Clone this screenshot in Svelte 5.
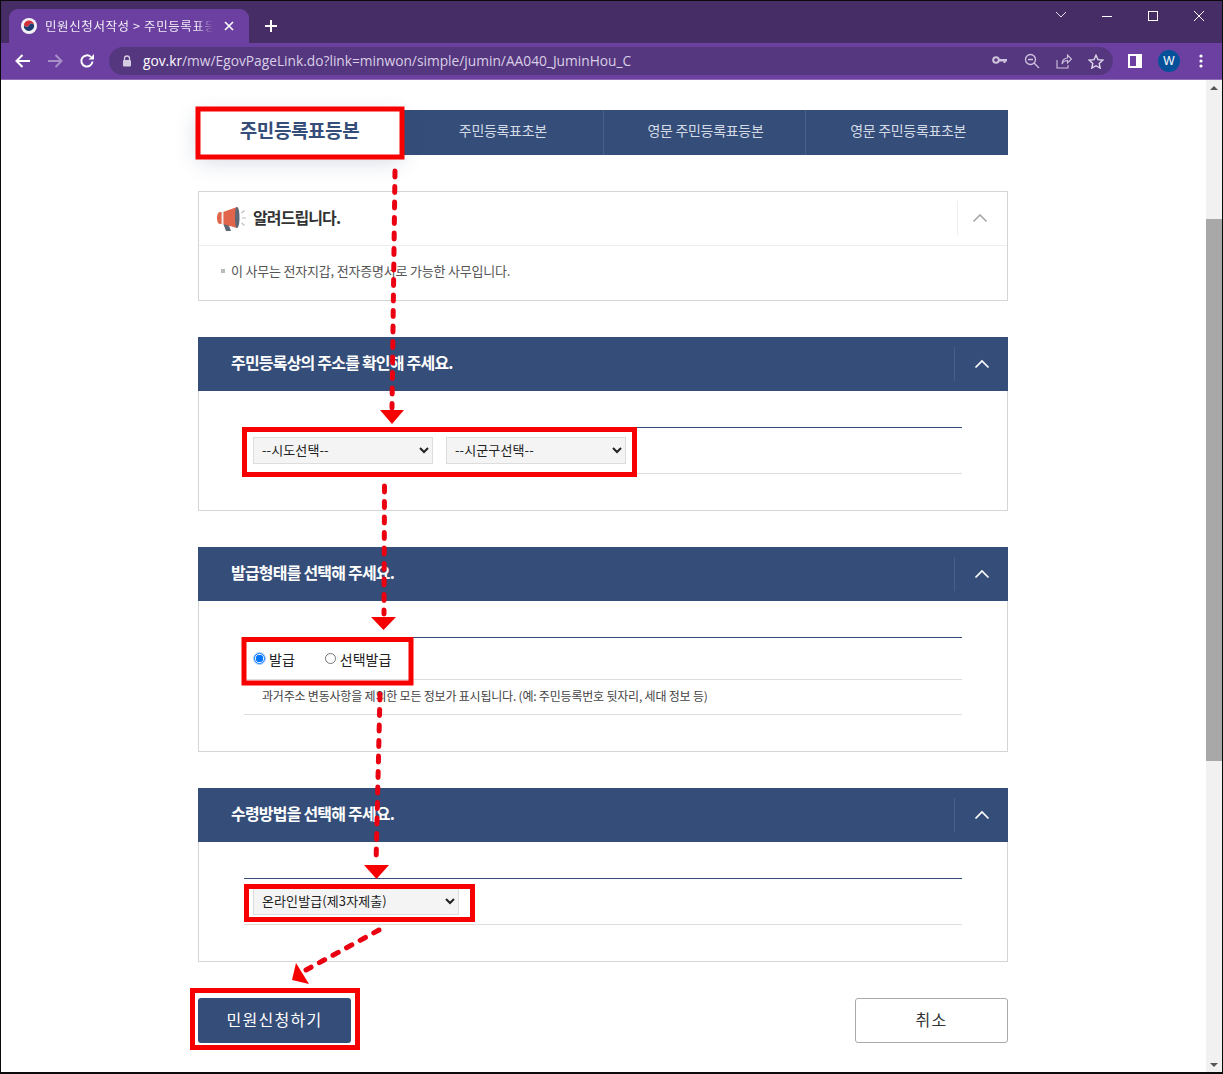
<script>
  const tabs = ['주민등록표등본', '주민등록표초본', '영문 주민등록표등본', '영문 주민등록표초본'];
  const sido = '--시도선택--';
  const sigungu = '--시군구선택--';

  // annotation boxes painted on top of the screenshot
  const boxes = [
    [198, 109, 204, 48],
    [244.5, 429.5, 390, 45],
    [244, 639.5, 167, 43.5],
    [246.5, 886.5, 226, 33],
    [192.5, 990.5, 165, 57]
  ];
  const lines = [
    [395, 171, 392, 408],
    [384.5, 486, 384, 614],
    [380, 694, 376, 864],
    [379, 930, 306, 970]
  ];
  const heads = ['380,410 404,410 392,424', '371,617 396,617 383.5,630', '364,865 389,865 376.5,879', '296,963 292,980 309,984'];
</script>

{#snippet chevron()}
  <svg class="chev" width="16" height="10" viewBox="0 0 16 10"><path d="M1.5 8.5 8 2l6.500 6.500" fill="none" stroke="currentColor" stroke-width="1.700"/></svg>
{/snippet}

{#snippet head(title)}
  <div class="section-head">
    <h3>{title}</h3>
    <span class="toggle">{@render chevron()}</span>
  </div>
{/snippet}

<div class="window">
  <header class="titlebar">
    <div class="tab">
      <svg class="favicon" width="16" height="16" viewBox="0 0 16 16">
        <circle cx="8" cy="8" r="8" fill="#f4f2f6"/>
        <path d="M2.800 7.200a5.200 5.200 0 0 1 10.400 .8c0-1.400-1.200-2.400-2.600-2.400S8.300 6.500 8 7.500 6.300 9 5.200 8.700 3.500 7.300 2.800 7.200Z" fill="#d3303c"/>
        <path d="M2.800 7.400c.7 0 1.300 1 2.400 1.300s2.500-.2 2.800-1.200 1.200-1.900 2.600-1.900 2.600 1 2.600 2.400a5.200 5.200 0 0 1-10.400-.6Z" fill="#1c3a70"/>
      </svg>
      <span class="tab-title">민원신청서작성 &gt; 주민등록표등본</span>
      <svg width="10" height="10" viewBox="0 0 10 10"><path d="M1 1l8 8M9 1l-8 8" stroke="#fff" stroke-width="1.600"/></svg>
    </div>
    <svg class="newtab" width="12" height="12" viewBox="0 0 12 12"><path d="M6 0v12M0 6h12" stroke="#fff" stroke-width="2"/></svg>
    <div class="winctl">
      <svg width="46" height="30" viewBox="0 0 46 30"><path d="M18 11l5 5 5-5" fill="none" stroke="#e4deec" stroke-width="1"/></svg>
      <svg width="46" height="30" viewBox="0 0 46 30"><path d="M18 15.500h10" stroke="#fff" stroke-width="1"/></svg>
      <svg width="46" height="30" viewBox="0 0 46 30"><rect x="18.500" y="10.500" width="9" height="9" fill="none" stroke="#fff"/></svg>
      <svg width="46" height="30" viewBox="0 0 46 30"><path d="M18 10l10 10M28 10 18 20" stroke="#fff" stroke-width="1"/></svg>
    </div>
  </header>

  <nav class="toolbar">
    <svg width="16" height="14" viewBox="0 0 16 14"><path d="M15 7H2M7.500 1 1.500 7l6 6" fill="none" stroke="#fff" stroke-width="2"/></svg>
    <svg class="dim" width="16" height="14" viewBox="0 0 16 14"><path d="M1 7h13M8.500 1l6 6-6 6" fill="none" stroke="#a88fc8" stroke-width="2"/></svg>
    <svg width="16" height="16" viewBox="0 0 16 16"><path d="M13.500 8.500A5.600 5.600 0 1 1 11.800 3.900" fill="none" stroke="#fff" stroke-width="2"/><path d="M9.500 6.500h5.500V1Z" fill="#fff"/></svg>
    <div class="omnibox">
      <svg width="10" height="12" viewBox="0 0 10 12"><path d="M2.500 5V3.500a2.500 2.500 0 0 1 5 0V5" fill="none" stroke="#d5cbe2" stroke-width="1.300"/><rect x="1" y="5" width="8" height="6.500" rx="1" fill="#d5cbe2"/></svg>
      <span class="url"><b>gov.kr</b>/mw/EgovPageLink.do?link=minwon/simple/jumin/AA040_JuminHou_C</span>
      <div class="omni-icons">
        <svg width="16" height="10" viewBox="0 0 16 10"><circle cx="4" cy="4" r="2.800" fill="none" stroke="#cfc4de" stroke-width="2"/><path d="M6.500 3h8.500v2.500h-1.500V7h-2V5.500H6.500Z" fill="#cfc4de"/></svg>
        <svg width="16" height="16" viewBox="0 0 16 16"><circle cx="6.500" cy="6.500" r="5" fill="none" stroke="#cfc4de" stroke-width="1.300"/><path d="M10 10l5 5M4 6.500h5" stroke="#cfc4de" stroke-width="1.300"/></svg>
        <svg width="16" height="16" viewBox="0 0 16 16"><path d="M1 7v8h11v-3M6 11c0-4 3-6 5.500-6V2L15.500 6l-4 4V7.500C9 7.500 7 9 6 11Z" fill="none" stroke="#cfc4de" stroke-width="1.100"/></svg>
        <svg width="16" height="15" viewBox="0 0 16 15"><path d="M8 1.200l2 4.500 4.800.5-3.600 3.200 1 4.700L8 11.700l-4.200 2.400 1-4.700L1.200 6.200 6 5.700Z" fill="none" stroke="#e0d8ea" stroke-width="1.400"/></svg>
      </div>
    </div>
    <svg class="panel" width="14" height="14" viewBox="0 0 14 14"><path fill-rule="evenodd" d="M0 0h14v14H0Zm2 2v10h6V2Z" fill="#fff"/></svg>
    <span class="avatar">W</span>
    <svg class="dots" width="4" height="14" viewBox="0 0 4 14"><circle cx="2" cy="2" r="1.600" fill="#fff"/><circle cx="2" cy="7" r="1.600" fill="#fff"/><circle cx="2" cy="12" r="1.600" fill="#fff"/></svg>
  </nav>

  <div class="viewport">
    <main class="page">
      <ul class="tabs">
        {#each tabs as t, i}
          <li class:active={i === 0}>{t}</li>
        {/each}
      </ul>

      <section class="notice">
        <div class="notice-head">
          <svg width="30" height="26" viewBox="0 0 30 26">
            <path d="M6 17l3 8h5l-3-8Z" fill="#5d6675"/>
            <path d="M20 1 6 6H3C1 6 0 9 0 12s1 6 3 6h3l14 4Z" fill="#e0654a"/>
            <path d="M5.500 6v12" stroke="#f3e9e5" stroke-width="2"/>
            <path d="M20 1c1.500 0 2.500 4.500 2.500 10.500S21.500 22 20 22s-2-4.500-2-10.500S18.500 1 20 1Z" fill="#5d6675"/>
            <path d="M24.500 7l3-2.500M25 12h4M24.500 17l3 2.500" stroke="#b9bec6" stroke-width="1.200"/>
          </svg>
          <h3>알려드립니다.</h3>
          <span class="toggle">{@render chevron()}</span>
        </div>
        <p class="notice-text"><i></i>이 사무는 전자지갑, 전자증명서로 가능한 사무입니다.</p>
      </section>

      <section class="section">
        {@render head('주민등록상의 주소를 확인해 주세요.')}
        <div class="section-body">
          <div class="row selects">
            <select><option>{sido}</option></select>
            <select><option>{sigungu}</option></select>
          </div>
        </div>
      </section>

      <section class="section">
        {@render head('발급형태를 선택해 주세요.')}
        <div class="section-body">
          <div class="row radios">
            <label><input type="radio" name="kind" checked />발급</label>
            <label><input type="radio" name="kind" />선택발급</label>
          </div>
          <p class="hint">과거주소 변동사항을 제외한 모든 정보가 표시됩니다. (예: 주민등록번호 뒷자리, 세대 정보 등)</p>
        </div>
      </section>

      <section class="section">
        {@render head('수령방법을 선택해 주세요.')}
        <div class="section-body">
          <div class="row selects receive">
            <select><option>온라인발급(제3자제출)</option></select>
          </div>
        </div>
      </section>

      <div class="actions">
        <button class="primary">민원신청하기</button>
        <button class="cancel">취소</button>
      </div>
    </main>

    <aside class="scrollbar">
      <span class="up"></span>
      <span class="thumb"></span>
      <span class="down"></span>
    </aside>
  </div>

  <svg class="marks" width="1223" height="1074" viewBox="0 0 1223 1074">
    {#each boxes as [x, y, w, h]}
      <rect {x} {y} width={w} height={h} fill="none" stroke="#f60000" stroke-width="5"/>
    {/each}
    {#each lines as [x1, y1, x2, y2]}
      <line {x1} {y1} {x2} {y2} stroke="#ea0010" stroke-width="5" stroke-linecap="round" stroke-dasharray="6 9.500"/>
    {/each}
    {#each heads as points}
      <polygon {points} fill="#f60000"/>
    {/each}
  </svg>
</div>

<style>
  :global(body) {
    margin: 0;
    background: #fff;
  }

  .window {
    position: relative;
    width: 1223px;
    height: 1074px;
    box-sizing: border-box;
    border: 1px solid #0a0a0a;
    border-width: 1px 1px 2px 1px;
    display: flex;
    flex-direction: column;
    overflow: hidden;
    font-family: 'Noto Sans CJK KR', 'Noto Sans', sans-serif;
  }

  .titlebar {
    height: 42px;
    flex-shrink: 0;
    background: #472d66;
    display: flex;
    align-items: flex-end;
    position: relative;
  }

  .tab {
    width: 240px;
    height: 34px;
    margin-left: 8px;
    box-sizing: border-box;
    padding: 0 15px 0 12px;
    background: #6c40a0;
    border-radius: 9px 9px 0 0;
    display: flex;
    align-items: center;
    color: #fff;
  }

  .favicon {
    flex-shrink: 0;
  }

  .tab-title {
    flex: 1;
    min-width: 0;
    margin: 0 11px 1px 8px;
    font-size: 12.500px;
    letter-spacing: 0.6px;
    line-height: 30px;
    height: 30px;
    white-space: nowrap;
    overflow: hidden;
    color: #f1ecf6;
    mask-image: linear-gradient(to right, #000 90%, transparent);
  }

  .newtab {
    margin: 0 0 11px 16px;
  }

  .winctl {
    position: absolute;
    right: 0;
    top: 0;
    display: flex;
  }

  .toolbar {
    height: 37px;
    flex-shrink: 0;
    box-sizing: border-box;
    background: #6c40a0;
    border-bottom: 1px solid #8e6db5;
    display: flex;
    align-items: center;
    padding: 0 14px 0 14px;
    gap: 0;
  }

  .toolbar > svg:nth-child(2) {
    margin-left: 16px;
  }

  .toolbar > svg:nth-child(3) {
    margin-left: 16px;
  }

  .omnibox {
    width: 1004px;
    height: 28px;
    margin-left: 14px;
    box-sizing: border-box;
    border-radius: 14px;
    background: #55377f;
    display: flex;
    align-items: center;
    padding: 0 9px 0 13px;
    flex-shrink: 0;
  }

  .url {
    margin: 0 0 1px 11px;
    font-family: 'Open Sans', sans-serif;
    font-size: 13.750px;
    color: #d9cfe6;
    white-space: nowrap;
  }

  .url b {
    font-weight: 400;
    color: #fff;
  }

  .omni-icons {
    margin-left: auto;
    display: flex;
    align-items: center;
    gap: 16px;
  }

  .panel {
    margin-left: 15px;
  }

  .avatar {
    width: 22px;
    height: 22px;
    margin-left: 16px;
    border-radius: 50%;
    background: #07519b;
    color: #fff;
    font: 12px/22px 'Liberation Sans', sans-serif;
    text-align: center;
    flex-shrink: 0;
  }

  .dots {
    margin-left: 19px;
  }

  .viewport {
    flex: 1;
    min-height: 0;
    display: flex;
    background: #fff;
  }

  .page {
    flex: 1;
    min-width: 0;
    padding: 30px 0 0 197px;
  }

  .tabs {
    list-style: none;
    width: 810px;
    height: 45px;
    margin: 0 0 36px;
    padding: 0;
    display: flex;
    background: #354d79;
  }

  .tabs li {
    flex: 1;
    padding-left: 2px;
    box-sizing: border-box;
    text-align: center;
    font-size: 14px;
    line-height: 41px;
    color: #d3dae6;
    letter-spacing: -0.3px;
    border-left: 1px solid #4a5f87;
  }

  .tabs li:nth-child(2) {
    border-left: 0;
  }

  .tabs li.active {
    flex: 0 0 203px;
    padding-left: 0;
    background: #fff;
    color: #354d79;
    font-size: 19px;
    font-weight: 700;
    line-height: 39px;
    letter-spacing: -0.4px;
    border: 0;
    box-shadow: 0 6px 22px rgba(53, 77, 121, 0.22);
    position: relative;
  }

  .notice {
    width: 810px;
    height: 110px;
    box-sizing: border-box;
    margin-bottom: 36px;
    border: 1px solid #d5d5d5;
  }

  .notice-head {
    height: 53px;
    border-bottom: 1px solid #eee;
    display: flex;
    align-items: center;
    padding-left: 18px;
    position: relative;
  }

  .notice-head h3 {
    margin: 0 0 4px 6px;
    font-size: 16px;
    font-weight: 700;
    letter-spacing: -0.9px;
    color: #333;
  }

  .notice-head .toggle {
    width: 50px;
    padding: 0 5px 0 0;
    color: #aaa;
    border-color: #eee;
    height: 34px;
    top: 9px;
  }

  .notice-text {
    margin: 0;
    padding: 15px 0 0 22px;
    font-size: 13px;
    line-height: 20px;
    letter-spacing: -0.2px;
    color: #555;
    display: flex;
    align-items: center;
  }

  .notice-text i {
    width: 4px;
    height: 4px;
    margin-right: 6px;
    background: #bbb;
  }

  .toggle {
    position: absolute;
    right: 0;
    top: 10px;
    width: 54px;
    height: 34px;
    padding-left: 1px;
    border-left: 1px solid #4a5f87;
    display: flex;
    align-items: center;
    justify-content: center;
    box-sizing: border-box;
    color: #fff;
  }

  .section {
    width: 810px;
    margin-bottom: 36px;
  }

  .section-head {
    height: 54px;
    background: #354d79;
    display: flex;
    align-items: center;
    padding-left: 33px;
    position: relative;
  }

  .section-head h3 {
    margin: 0 0 4px;
    font-size: 16px;
    font-weight: 700;
    letter-spacing: -0.8px;
    color: #fff;
  }

  .section-body {
    box-sizing: border-box;
    padding: 36px 45px 36px;
    border: 1px solid #d5d5d5;
    border-top: 0;
  }

  .row {
    box-sizing: border-box;
    border-top: 1px solid #354d79;
    border-bottom: 1px solid #ddd;
    display: flex;
    align-items: center;
    color: #222;
    font-size: 13px;
  }

  .selects {
    height: 47px;
    gap: 13px;
    padding-left: 9px;
  }

  select {
    width: 180px;
    height: 27px;
    box-sizing: border-box;
    padding: 0 0 2px 4px;
    background-color: #f4f4f4;
    border: 1px solid #ddd;
    border-radius: 0;
    font-family: inherit;
    font-size: 13px;
    letter-spacing: 0.1px;
    color: #222;
  }

  .receive select {
    width: 206px;
  }

  .radios {
    height: 43px;
    gap: 29px;
    padding-left: 9px;
  }

  .radios label {
    display: flex;
    align-items: center;
    gap: 3px;
    font-size: 14px;
    line-height: 20px;
  }

  .radios input {
    appearance: none;
    width: 11px;
    height: 11px;
    margin: 0 1px;
    box-sizing: border-box;
    border: 1px solid #767676;
    border-radius: 50%;
    background: #fff;
  }

  .radios input:checked {
    border: 1.500px solid #0075ff;
    background: radial-gradient(circle, #0075ff 0 3.500px, #fff 4px);
    box-shadow: 0 0 0 1px #a9cdf8;
  }

  .hint {
    margin: 0;
    height: 35px;
    box-sizing: border-box;
    padding-left: 18px;
    border-bottom: 1px solid #ddd;
    font-size: 12px;
    line-height: 31px;
    letter-spacing: -0.2px;
    color: #444;
  }

  .actions {
    width: 810px;
    display: flex;
    justify-content: space-between;
  }

  button {
    width: 153px;
    height: 45px;
    padding: 0 0 4px;
    border-radius: 3px;
    font-family: inherit;
    font-size: 16px;
    letter-spacing: 1.300px;
  }

  .primary {
    background: #354d79;
    border: 0;
    color: #fff;
  }

  .cancel {
    background: #fff;
    border: 1px solid #aaa;
    color: #333;
  }

  .scrollbar {
    width: 16px;
    flex-shrink: 0;
    background: #f1f1f1;
    display: flex;
    flex-direction: column;
    align-items: center;
    position: relative;
  }

  .up,
  .down {
    position: absolute;
    width: 0;
    height: 0;
    border-left: 4px solid transparent;
    border-right: 4px solid transparent;
  }

  .up {
    top: 6px;
    border-bottom: 4px solid #555;
  }

  .down {
    bottom: 5px;
    border-top: 4px solid #555;
  }

  .thumb {
    width: 100%;
    height: 542px;
    margin-top: 139px;
    background: #a8a8a8;
  }

  .marks {
    position: absolute;
    left: -1px;
    top: -1px;
    pointer-events: none;
  }
</style>
